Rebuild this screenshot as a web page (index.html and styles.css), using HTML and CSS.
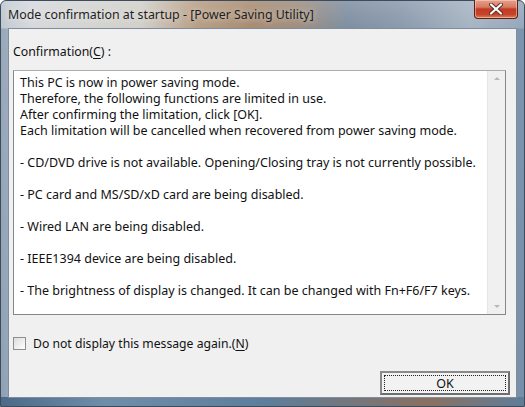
FILE: index.html
```html
<!DOCTYPE html>
<html>
<head>
<meta charset="utf-8">
<link rel="stylesheet" href="styles.css">
</head>
<body>
<div class="window">
  <div class="titlebar">
    <span class="title">Mode confirmation at startup - [Power Saving Utility]</span>
    <div class="close">
      <svg width="16" height="12" viewBox="0 0 16 12"><path d="M3 1.5 L13 10.5 M13 1.5 L3 10.5" stroke="#5a2a20" stroke-width="4" stroke-linecap="round"/><path d="M3 1.5 L13 10.5 M13 1.5 L3 10.5" stroke="#ffffff" stroke-width="2.2" stroke-linecap="round"/></svg>
    </div>
  </div>
  <div class="client">
    <div class="label">Confirmation(<u>C</u>) :</div>
    <div class="textbox">
      <div class="text">
        <p>This PC is now in power saving mode.<br>Therefore, the following functions are limited in use.<br>After confirming the limitation, click [OK].<br>Each limitation will be cancelled when recovered from power saving mode.</p>
        <p>- CD/DVD drive is not available. Opening/Closing tray is not currently possible.</p>
        <p>- PC card and MS/SD/xD card are being disabled.</p>
        <p>- Wired LAN are being disabled.</p>
        <p>- IEEE1394 device are being disabled.</p>
        <p>- The brightness of display is changed. It can be changed with Fn+F6/F7 keys.</p>
      </div>
      <div class="scrollbar">
        <span class="arrow up"></span>
        <span class="arrow down"></span>
      </div>
    </div>
    <div class="check"><span class="box"></span><span>Do not display this message again.(<u>N</u>)</span></div>
    <div class="actions"><div class="ok"><span class="focus">OK</span></div></div>
  </div>
</div>
</body>
</html>
```
FILE: styles.css
```css
html, body { margin: 0; padding: 0; }
body { width: 525px; height: 407px; overflow: hidden; font-family: "Noto Sans", "DejaVu Sans", sans-serif; font-size: 12px; color: #111; }
.window {
  width: 525px; height: 407px; box-sizing: border-box;
  display: flex; flex-direction: column;
  padding: 0 7px 8px 7px;
  background:
    linear-gradient(180deg, rgba(255,255,255,0.18) 0px, rgba(255,255,255,0.05) 27px, rgba(90,120,150,0.35) 28px, rgba(90,120,150,0.45) 100%),
    linear-gradient(90deg, #b9c3cd 0px, #c4cbd2 8px, #d4d7da 30px, #cfcdc6 140px, #b39a80 195px, #a3866a 250px, #9a887a 300px, #78899c 345px, #8495a8 400px, #a2b0bf 470px, #8ea2b8 525px);
  border: 1px solid #3d4c5c;
  border-radius: 6px 6px 0 0;
  position: relative;
}
.window::after {
  content: ""; position: absolute; left: 0; right: 0; bottom: 0; height: 9px;
  background: linear-gradient(90deg, #4a6a88 0%, #6f8eaa 20%, #5d7e9c 50%, #8a7060 82%, #5f7d9a 100%);
}
.titlebar {
  height: 27px; display: flex; align-items: flex-start; justify-content: space-between;
  position: relative;
}
.title {
  margin-top: 5px; margin-left: 0px;
  font-size: 12.4px; color: #1e1e1e;
  text-shadow: 0 0 6px rgba(255,255,255,0.7);
}
.close {
  width: 42px; height: 18px; margin-top: -1px; margin-right: -1px;
  border: 1px solid #5a2118; border-top: none;
  border-radius: 0 0 4px 4px;
  background: linear-gradient(180deg, #e6a28e 0%, #d77a62 40%, #c13a24 50%, #c6442a 80%, #df8058 100%);
  box-shadow: inset 0 0 0 1px rgba(255,220,200,0.5);
  display: flex; align-items: center; justify-content: center;
}
.close svg { display: block; }
.client {
  flex: 1; background: #f0f0f0;
  border: 1px solid #7f8d9c;
  display: flex; flex-direction: column;
  padding: 0 10px 0 4px;
  position: relative; z-index: 1;
}
.label { margin-top: 15px; height: 16px; line-height: 16px; font-size: 12.3px; }
.textbox {
  margin-top: 10px; height: 245px; box-sizing: border-box;
  border: 1px solid #828790; border-top-color: #abadb3;
  background: #fff; display: flex;
}
.text { flex: 1; padding: 4px 6px; line-height: 16px; font-size: 12.5px; color: #111; white-space: nowrap; overflow: hidden; }
.text p { margin: 0 0 16px 0; }
.scrollbar {
  width: 17px; background: #f0f0f0; border-left: 1px solid #e6e6e6;
  display: flex; flex-direction: column; justify-content: space-between; align-items: center;
  padding: 6px 0;
}
.arrow { width: 0; height: 0; border-left: 3px solid transparent; border-right: 3px solid transparent; }
.arrow.up { border-bottom: 3px solid #b8b8b8; }
.arrow.down { border-top: 3px solid #b8b8b8; }
.check { margin-top: 21px; display: flex; align-items: center; height: 14px; font-size: 12.2px; }
.box { width: 11px; height: 11px; border: 1px solid #8e8f8f; background: linear-gradient(135deg, #dcdcdc, #fff); margin-right: 7px; }
.actions { margin-top: 21px; display: flex; justify-content: flex-end; margin-right: -4px; }
.ok {
  width: 130px; height: 24px; box-sizing: border-box;
  border: 2px solid #6e6e6e; border-top-color: #8a8a8a; border-left-color: #8a8a8a;
  background: #f2f2f2; padding: 2px;
}
.focus {
  display: flex; height: 100%; box-sizing: border-box; align-items: center; justify-content: center;
  border: 1px dotted #222; font-size: 12.5px; color: #111;
}
u { text-decoration: underline; text-underline-offset: 2px; }
```
